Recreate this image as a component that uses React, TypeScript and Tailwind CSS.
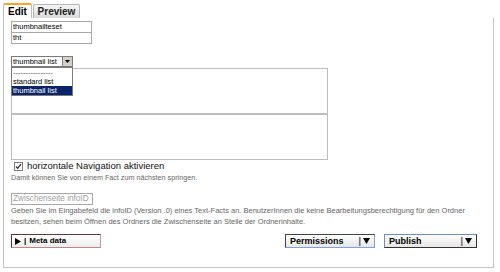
import React from "react";

const font = { fontFamily: '"Liberation Sans", Arial, sans-serif' };

function Tabs() {
  return (
    <div className="flex items-end pl-[3px] pt-[3px] h-[18px]">
      <div className="h-[15px] w-[29px] bg-white border-t-2 border-t-[#f5a623] border-x border-x-[#bdbdbd] rounded-t-[2px] flex items-center justify-center text-[10px] font-bold text-black">
        Edit
      </div>
      <div className="ml-[1px] h-[14px] w-[47px] bg-gradient-to-b from-[#f6f6f6] to-[#dadada] border border-b-0 border-[#b5b5b5] rounded-t-[2px] flex items-center justify-center text-[10px] font-bold text-[#222]">
        Preview
      </div>
    </div>
  );
}

function TextBox({ value, className = "" }: { value: string; className?: string }) {
  return (
    <div
      className={
        "h-[12px] w-[81px] border border-[#a8a8a8] bg-white px-[1px] flex items-center text-[7.5px] text-black leading-none " +
        className
      }
    >
      {value}
    </div>
  );
}

function SelectOpen() {
  return (
    <div className="relative z-10 w-[62px]">
      <div className="h-[11px] border border-[#7a7a7a] bg-white flex items-center">
        <span className="pl-[1px] text-[7.5px] leading-none flex-1 text-black">thumbnail list</span>
        <span className="h-[9px] w-[10px] bg-[#d4d0c8] border-l border-[#808080] flex items-center justify-center">
          <svg width="5" height="3" viewBox="0 0 5 3">
            <path d="M0 0h5L2.5 3z" fill="#000" />
          </svg>
        </span>
      </div>
      <div className="absolute left-0 top-[11px] w-[62px] border border-[#7a7a7a] bg-white text-[7.5px] leading-none">
        <div className="h-[9px] px-[1px] flex items-center text-[#555]">----------------</div>
        <div className="h-[9px] px-[1px] flex items-center text-black">standard list</div>
        <div className="h-[9px] px-[1px] flex items-center bg-[#0a246a] text-white">thumbnail list</div>
      </div>
    </div>
  );
}

function Checkbox() {
  return (
    <span className="h-[9px] w-[9px] border border-[#7a7a7a] bg-white flex items-center justify-center">
      <svg width="7" height="7" viewBox="0 0 7 7">
        <path d="M1 3.5l1.7 1.8L6 1.2" stroke="#333" strokeWidth="1.3" fill="none" />
      </svg>
    </span>
  );
}

function SplitButton({ label, className, w }: { label: string; className: string; w: string }) {
  return (
    <div
      className={
        "h-[14px] flex items-center bg-gradient-to-b from-white to-[#e6e6e6] border " + w + " " + className
      }
    >
      <span className="pl-[4px] flex-1 text-[9px] font-bold text-black leading-none">{label}</span>
      <span className="pr-[4px] flex items-center gap-[2px] text-[9px] font-bold leading-none">
        <span className="text-[#555]">|</span>
        <svg width="7" height="6" viewBox="0 0 7 6">
          <path d="M0 0h7L3.5 6z" fill="#000" />
        </svg>
      </span>
    </div>
  );
}

export default function App() {
  return (
    <div className="w-[500px] h-[272px] bg-white overflow-hidden" style={font}>
      <Tabs />
      <div className="ml-[3px] w-[491px] h-[250px] border-x border-b border-[#c4c4c4] pl-[7px]">
        <div className="pt-[3px]">
          <TextBox value="thumbnailteset" />
          <TextBox value="tht" className="-mt-px" />
        </div>
        <div className="mt-[12px]">
          <SelectOpen />
        </div>
        <div className="mt-px h-[46px] w-[317px] border border-[#bdbdbd] bg-white" />
        <div className="h-[46px] w-[317px] border border-[#bdbdbd] bg-white" />
        <div className="mt-[1px] flex items-center gap-[4px] pl-[3px] h-[10px]">
          <Checkbox />
          <span className="text-[9.5px] leading-none text-[#111]">horizontale Navigation aktivieren</span>
        </div>
        <div className="mt-[2px] text-[7.2px] leading-[9px] text-[#666]">
          Damit können Sie von einem Fact zum nächsten springen.
        </div>
        <div className="mt-[11px] h-[12px] w-[82px] border border-[#a8a8a8] bg-white px-[1px] flex items-center whitespace-nowrap overflow-hidden text-[8.2px] leading-none text-[#a0a0a0]">
          Zwischenseite infoID
        </div>
        <div className="w-[470px] text-[7.5px] leading-[11px] text-[#666]">
          Geben Sie im Eingabefeld die infoID (Version .0) eines Text-Facts an. BenutzerInnen die keine
          Bearbeitungsberechtigung für den Ordner besitzen, sehen beim Öffnen des Ordners die Zwischenseite an
          Stelle der Ordnerinhalte.
        </div>
        <div className="mt-[7px] flex items-center pr-[16px]">
          <div className="h-[14px] w-[90px] flex items-center gap-[3px] pl-[3px] bg-gradient-to-b from-white to-[#ececec] border border-[#5a3a3a] border-r-[#c99] border-b-[#b88]">
            <svg width="6" height="7" viewBox="0 0 6 7">
              <path d="M0 0l6 3.5L0 7z" fill="#000" />
            </svg>
            <span className="text-[8px] font-bold leading-none">|</span>
            <span className="text-[8px] font-bold leading-none text-black">Meta data</span>
          </div>
          <div className="flex-1" />
          <SplitButton label="Permissions" w="w-[90px]" className="border-[#444] border-r-[#7fa0d8] border-b-[#7fa0d8]" />
          <div className="w-[9px]" />
          <SplitButton label="Publish" w="w-[93px]" className="border-[#6d8fd0] border-r-[#333] border-b-[#333]" />
        </div>
      </div>
    </div>
  );
}
